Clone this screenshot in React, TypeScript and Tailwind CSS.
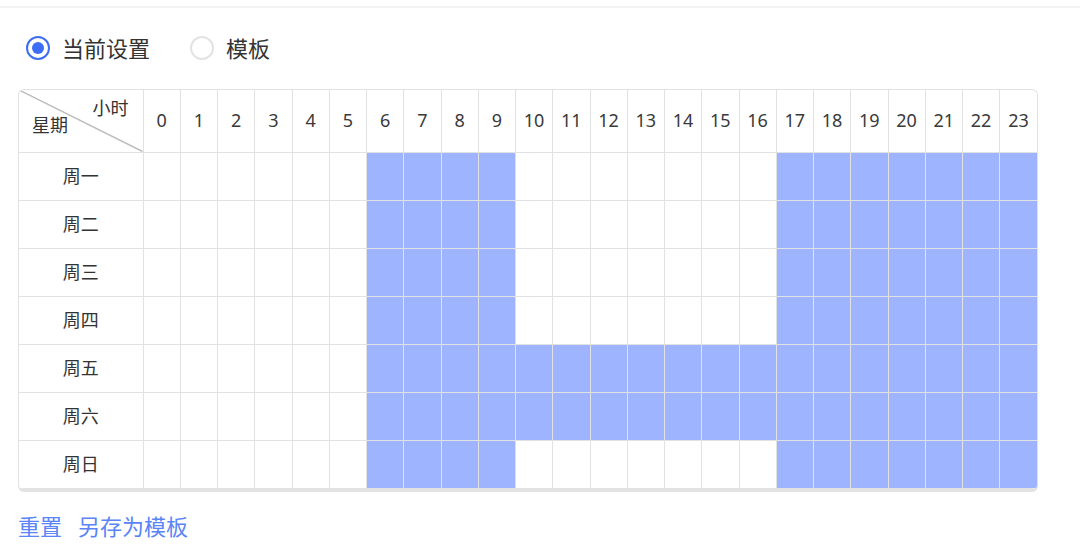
import React, { useState } from "react";

const days = ["周一", "周二", "周三", "周四", "周五", "周六", "周日"];
const hours = Array.from({ length: 24 }, (_, i) => i);

function isOn(day: number, hour: number) {
  if (hour < 6) return false;
  if (day === 4 || day === 5) return true;
  return hour <= 9 || hour >= 17;
}

function Radio({ checked, label, onClick }: { checked: boolean; label: string; onClick: () => void }) {
  return (
    <button onClick={onClick} className="flex items-center gap-[12px]">
      <span
        className={
          checked
            ? "w-6 h-6 rounded-full border-2 border-[#3d6df6] flex items-center justify-center"
            : "w-6 h-6 rounded-full border-2 border-[#e3e3e3]"
        }
      >
        {checked && <span className="w-3 h-3 rounded-full bg-[#3d6df6]" />}
      </span>
      <span className="text-[22px] leading-none text-[#333]">{label}</span>
    </button>
  );
}

export default function App() {
  const [mode, setMode] = useState(0);

  return (
    <div
      className="w-[1080px] h-[550px] bg-white overflow-hidden"
      style={{ fontFamily: '"Noto Sans", "Noto Sans CJK SC", sans-serif' }}
    >
      <div className="mt-[6px] h-[2px] bg-[#f3f3f3]" />

      <div className="flex items-center gap-[40px] ml-[26px] mt-[28px] h-6">
        <Radio checked={mode === 0} label="当前设置" onClick={() => setMode(0)} />
        <Radio checked={mode === 1} label="模板" onClick={() => setMode(1)} />
      </div>

      <div className="ml-[18px] mt-[29px] w-[1020px] rounded-md border border-[#e2e2e2] border-b-[3px] overflow-hidden">
        <table className="w-full table-fixed border-collapse text-[#333]">
          <colgroup>
            <col className="w-[124px]" />
            {hours.map((h) => (
              <col key={h} />
            ))}
          </colgroup>
          <thead>
            <tr className="h-[62px]">
              <th className="relative p-0 border-r border-b border-[#e2e2e2] font-normal">
                <svg className="absolute inset-0 w-full h-full" preserveAspectRatio="none" viewBox="0 0 124 62">
                  <line x1="0" y1="0" x2="124" y2="62" stroke="#bdbdbd" strokeWidth="1.5" />
                </svg>
                <span className="absolute right-[14px] top-[5px] text-[18px]">小时</span>
                <span className="absolute left-[13px] bottom-[13px] text-[18px]">星期</span>
              </th>
              {hours.map((h) => (
                <th
                  key={h}
                  className="p-0 border-r last:border-r-0 border-b border-[#e2e2e2] font-normal text-[18px] text-[#3a3a3a]"
                >
                  {h}
                </th>
              ))}
            </tr>
          </thead>
          <tbody>
            {days.map((d, di) => (
              <tr key={d} className="h-[48px]">
                <td className="p-0 border-r border-b border-[#e2e2e2] text-center text-[18px]">
                  {d}
                </td>
                {hours.map((h) => (
                  <td
                    key={h}
                    className={
                      (isOn(di, h) ? "bg-[#9fb4fe] " : "bg-white ") +
                      "p-0 border-r last:border-r-0 border-b border-[#e2e2e2]"
                    }
                  />
                ))}
              </tr>
            ))}
          </tbody>
        </table>
      </div>

      <div className="flex gap-[16px] ml-[18px] mt-[18px] text-[22px] text-[#5a84f7]">
        <button>重置</button>
        <button>另存为模板</button>
      </div>
    </div>
  );
}
